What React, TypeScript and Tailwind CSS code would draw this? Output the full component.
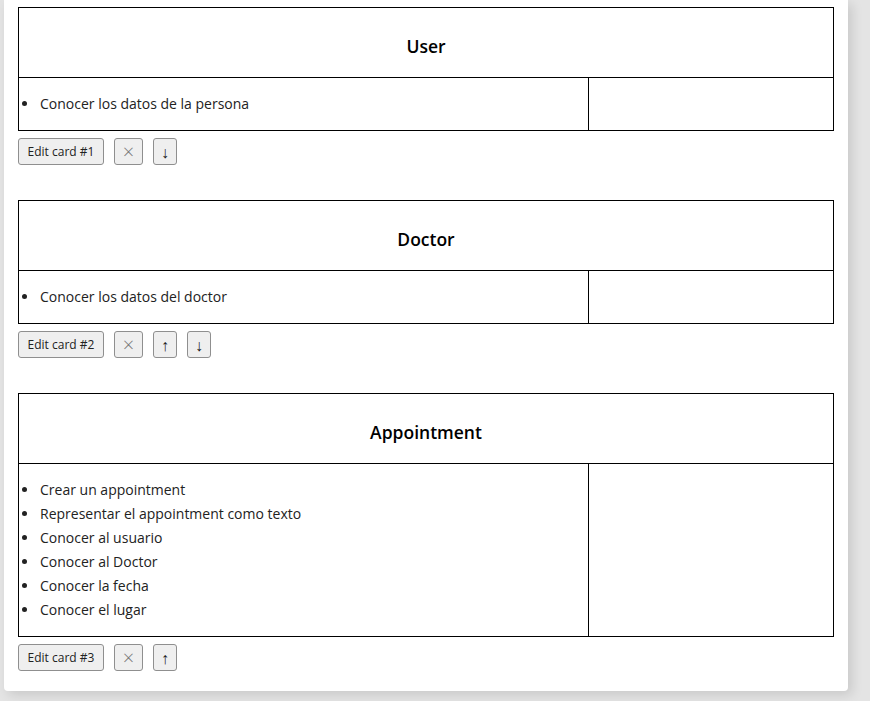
const cards = [
  { n: 1, title: "User", items: ["Conocer los datos de la persona"], up: false, down: true },
  { n: 2, title: "Doctor", items: ["Conocer los datos del doctor"], up: true, down: true },
  {
    n: 3,
    title: "Appointment",
    items: [
      "Crear un appointment",
      "Representar el appointment como texto",
      "Conocer al usuario",
      "Conocer al Doctor",
      "Conocer la fecha",
      "Conocer el lugar",
    ],
    up: true,
    down: false,
  },
];

function Btn({ children, className = "" }: { children: React.ReactNode; className?: string }) {
  return (
    <button
      className={`h-[27px] rounded-[3px] border border-[#8f8f8f] bg-[#efefef] text-[#222] flex items-center justify-center ${className}`}
    >
      {children}
    </button>
  );
}

function Card({ card }: { card: (typeof cards)[number] }) {
  return (
    <div>
      <div className="border border-black">
        <div className="h-[70px] flex items-center justify-center pt-[7px] border-b border-black text-[17.5px] font-semibold text-black">
          {card.title}
        </div>
        <div className="grid grid-cols-[570px_1fr]">
          <div className="border-r border-black py-[14px]">
            <ul className="list-disc pl-[20px] text-[14px] leading-[24px] text-[#222]">
              {card.items.map((t) => (
                <li key={t} className="pl-[1px]">
                  {t}
                </li>
              ))}
            </ul>
          </div>
          <div />
        </div>
      </div>
      <div className="flex gap-[10px] mt-[7px]">
        <Btn className="w-[86px] text-[12px]">Edit card #{card.n}</Btn>
        <Btn className="w-[29px] text-[20px] font-light text-[#777]">×</Btn>
        {card.up && <Btn className="w-[24px] text-[16px] font-light">↑</Btn>}
        {card.down && <Btn className="w-[24px] text-[16px] font-light">↓</Btn>}
      </div>
    </div>
  );
}

export default function App() {
  return (
    <div className="min-h-screen bg-[#e4e4e4] overflow-hidden" style={{ fontFamily: '"Open Sans", sans-serif' }}>
      <div className="ml-[4px] w-[844px] bg-white rounded-b-[4px] shadow-[4px_4px_12px_rgba(0,0,0,0.12)] px-[14px] pt-[7px] pb-[20px] flex flex-col gap-[35px]">
        {cards.map((c) => (
          <Card key={c.n} card={c} />
        ))}
      </div>
    </div>
  );
}
